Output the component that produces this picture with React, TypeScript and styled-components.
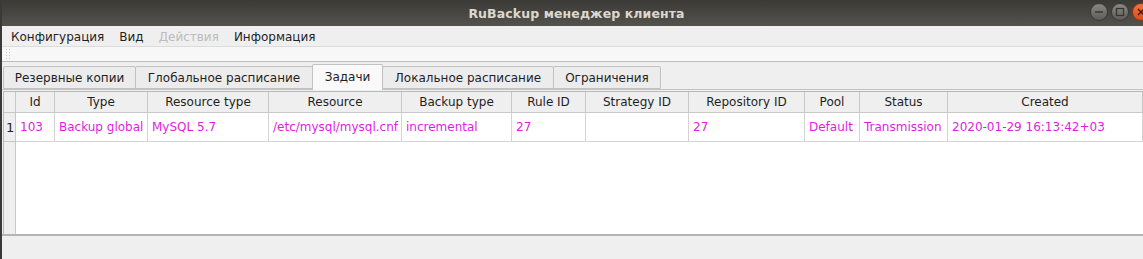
import React from "react";
import styled, { createGlobalStyle } from "styled-components";

const Global = createGlobalStyle`
  html, body { margin: 0; padding: 0; background: #efefef; }
  body { font-family: "DejaVu Sans", "Liberation Sans", sans-serif; font-size: 12px; color: #1f1f1f; }
  * { box-sizing: border-box; }
`;

const Window = styled.div`
  width: 1143px;
  height: 259px;
  display: flex;
  flex-direction: column;
  overflow: hidden;
  background: #efefef;
  border-left: 2px solid #3a3935;
`;

const TitleBar = styled.div`
  height: 26px;
  flex: none;
  display: grid;
  grid-template-columns: 1fr auto 1fr;
  align-items: center;
  background: linear-gradient(#3b3a36, #54524c);
  margin-left: -2px;
`;

const Title = styled.div`
  grid-column: 2;
  font-weight: bold;
  font-size: 12.5px;
  color: #dcd8cf;
  letter-spacing: 0.1px;
  padding-left: 10px;
`;

const WinButtons = styled.div`
  grid-column: 3;
  justify-self: end;
  display: flex;
  gap: 3px;
  margin-right: -7px;
  margin-top: -2px;
`;

const WinButton = styled.div<{ $close?: boolean }>`
  width: 18px;
  height: 18px;
  border-radius: 50%;
  display: flex;
  align-items: center;
  justify-content: center;
  border: 1px solid ${(p) => (p.$close ? "#8a3a17" : "#3a3935")};
  background: ${(p) =>
    p.$close
      ? "linear-gradient(#f2713d, #df4c18)"
      : "linear-gradient(#8a8882, #5e5c57)"};
`;

const MenuBar = styled.div`
  height: 20px;
  flex: none;
  display: flex;
  align-items: center;
  padding-left: 7px;
  padding-top: 1px;
  font-size: 12px;
`;

const MenuItem = styled.span<{ $disabled?: boolean }>`
  padding: 0 2px;
  margin-right: 11px;
  color: ${(p) => (p.$disabled ? "#bcbcbc" : "#1f1f1f")};
`;

const ToolBar = styled.div`
  height: 16px;
  flex: none;
  background: #f7f7f7;
  border-top: 1px solid #dcdcdc;
  border-bottom: 1px solid #bdbdbd;
  display: flex;
  align-items: center;
  padding-left: 3px;
`;

const Handle = styled.div`
  width: 6px;
  height: 12px;
  background-image: radial-gradient(circle, #c4c4c4 0.8px, transparent 1px);
  background-size: 3px 3px;
`;

const TabBar = styled.div`
  height: 28px;
  flex: none;
  display: flex;
  align-items: flex-end;
  padding-left: 1px;
  border-bottom: 1px solid #c2c2c2;
`;

const Tab = styled.div<{ $active?: boolean; $w: number }>`
  width: ${(p) => p.$w}px;
  height: ${(p) => (p.$active ? "26px" : "23px")};
  margin-bottom: ${(p) => (p.$active ? "-1px" : "0")};
  display: flex;
  align-items: center;
  justify-content: center;
  padding-bottom: ${(p) => (p.$active ? "2px" : "0")};
  border: 1px solid #c2c2c2;
  border-bottom: ${(p) => (p.$active ? "none" : "1px solid #c2c2c2")};
  border-radius: 2px 2px 0 0;
  background: ${(p) => (p.$active ? "#f9f9f9" : "#ececec")};
  margin-left: -1px;
  position: relative;
  z-index: ${(p) => (p.$active ? 1 : 0)};
  white-space: nowrap;
  &:first-child { margin-left: 0; }
`;

const Pane = styled.div`
  flex: 1;
  display: flex;
  padding: 1px 0 0 1px;
  border-bottom: 2px solid #b5b5b5;
`;

const Table = styled.div`
  flex: 1;
  display: grid;
  grid-template-columns: 12px 39px 93px 121px 133px 110px 74px 103px 116px 55px 88px 1fr;
  grid-template-rows: 21px 29px 1fr;
  border: 1px solid #b9b9b9;
  border-right: none;
  border-bottom: none;
  background: #ffffff;
`;

const Corner = styled.div`
  background: #efefef;
  border-right: 1px solid #c8c8c8;
  border-bottom: 1px solid #c8c8c8;
`;

const HeadCell = styled.div`
  background: #efefef;
  border-right: 1px solid #c8c8c8;
  border-bottom: 1px solid #c8c8c8;
  display: flex;
  align-items: center;
  justify-content: center;
  white-space: nowrap;
  color: #1f1f1f;
`;

const RowHead = styled.div`
  background: #efefef;
  border-right: 1px solid #c8c8c8;
  border-bottom: 1px solid #c8c8c8;
  display: flex;
  align-items: center;
  padding-left: 2px;
  color: #1f1f1f;
  font-size: 13px;
`;

const Cell = styled.div`
  border-right: 1px solid #d4d4d4;
  border-bottom: 1px solid #d4d4d4;
  display: flex;
  align-items: center;
  padding-left: 4px;
  white-space: nowrap;
  overflow: hidden;
  color: #dd1fdd;
`;

const FillerHead = styled.div`
  background: #efefef;
  border-right: 1px solid #c8c8c8;
`;

const Filler = styled.div`
  grid-column: 2 / -1;
  background: #ffffff;
`;

const StatusBar = styled.div`
  height: 23px;
  flex: none;
  background: #efefef;
`;

const headers = [
  "Id",
  "Type",
  "Resource type",
  "Resource",
  "Backup type",
  "Rule ID",
  "Strategy ID",
  "Repository ID",
  "Pool",
  "Status",
  "Created",
];

const row = [
  "103",
  "Backup global",
  "MySQL 5.7",
  "/etc/mysql/mysql.cnf",
  "incremental",
  "27",
  "",
  "27",
  "Default",
  "Transmission",
  "2020-01-29 16:13:42+03",
];

const tabs: { label: string; w: number }[] = [
  { label: "Резервные копии", w: 133 },
  { label: "Глобальное расписание", w: 178 },
  { label: "Задачи", w: 71 },
  { label: "Локальное расписание", w: 172 },
  { label: "Ограничения", w: 108 },
];

export default function App() {
  return (
    <>
      <Global />
      <Window>
        <TitleBar>
          <Title>RuBackup менеджер клиента</Title>
          <WinButtons>
            <WinButton>
              <svg width="10" height="10" viewBox="0 0 10 10">
                <line x1="1" y1="5" x2="9" y2="5" stroke="#35342f" strokeWidth="1.4" />
              </svg>
            </WinButton>
            <WinButton>
              <svg width="10" height="10" viewBox="0 0 10 10">
                <rect x="1.5" y="1.5" width="7" height="7" fill="none" stroke="#35342f" strokeWidth="1.2" />
              </svg>
            </WinButton>
            <WinButton $close>
              <svg width="10" height="10" viewBox="0 0 10 10">
                <path d="M2 2 L8 8 M8 2 L2 8" stroke="#3a1a0a" strokeWidth="1.4" />
              </svg>
            </WinButton>
          </WinButtons>
        </TitleBar>
        <MenuBar>
          <MenuItem>Конфигурация</MenuItem>
          <MenuItem>Вид</MenuItem>
          <MenuItem $disabled>Действия</MenuItem>
          <MenuItem>Информация</MenuItem>
        </MenuBar>
        <ToolBar>
          <Handle />
        </ToolBar>
        <TabBar>
          {tabs.map((t) => (
            <Tab key={t.label} $w={t.w} $active={t.label === "Задачи"}>
              {t.label}
            </Tab>
          ))}
        </TabBar>
        <Pane>
          <Table>
            <Corner />
            {headers.map((h) => (
              <HeadCell key={h}>{h}</HeadCell>
            ))}
            <RowHead>1</RowHead>
            {row.map((c, i) => (
              <Cell key={i}>{c}</Cell>
            ))}
            <FillerHead />
            <Filler />
          </Table>
        </Pane>
        <StatusBar />
      </Window>
    </>
  );
}
